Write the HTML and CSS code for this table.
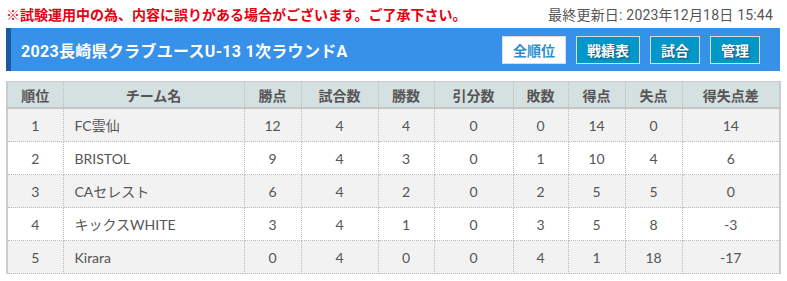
FILE: index.html
```html
<!DOCTYPE html>
<html lang="ja">
<head>
<meta charset="utf-8">
<link rel="stylesheet" href="styles.css">
</head>
<body>
<div class="page">
  <div class="notice-row">
    <span class="notice">※試験運用中の為、内容に誤りがある場合がございます。ご了承下さい。</span>
    <span class="updated">最終更新日: 2023年12月18日 15:44</span>
  </div>
  <div class="titlebar">
    <h1 class="title">2023長崎県クラブユースU-13 1次ラウンドA</h1>
    <div class="btns">
      <a class="btn btn-wide btn-active">全順位</a>
      <a class="btn btn-wide">戦績表</a>
      <a class="btn">試合</a>
      <a class="btn">管理</a>
    </div>
  </div>
  <table class="standings">
    <colgroup>
      <col style="width:56px"><col style="width:181px"><col style="width:57px"><col style="width:77px"><col style="width:56px"><col style="width:79px"><col style="width:55px"><col style="width:57px"><col style="width:57px"><col style="width:98px">
    </colgroup>
    <thead>
      <tr><th>順位</th><th>チーム名</th><th>勝点</th><th>試合数</th><th>勝数</th><th>引分数</th><th>敗数</th><th>得点</th><th>失点</th><th>得失点差</th></tr>
    </thead>
    <tbody>
      <tr><td>1</td><td class="team">FC雲仙</td><td>12</td><td>4</td><td>4</td><td>0</td><td>0</td><td>14</td><td>0</td><td>14</td></tr>
      <tr><td>2</td><td class="team">BRISTOL</td><td>9</td><td>4</td><td>3</td><td>0</td><td>1</td><td>10</td><td>4</td><td>6</td></tr>
      <tr><td>3</td><td class="team">CAセレスト</td><td>6</td><td>4</td><td>2</td><td>0</td><td>2</td><td>5</td><td>5</td><td>0</td></tr>
      <tr><td>4</td><td class="team">キックスWHITE</td><td>3</td><td>4</td><td>1</td><td>0</td><td>3</td><td>5</td><td>8</td><td>-3</td></tr>
      <tr><td>5</td><td class="team">Kirara</td><td>0</td><td>4</td><td>0</td><td>0</td><td>4</td><td>1</td><td>18</td><td>-17</td></tr>
    </tbody>
  </table>
</div>
</body>
</html>
```
FILE: styles.css
```css
html, body {
  margin: 0;
  padding: 0;
  background: #fff;
}
.page {
  padding: 0 7px 0 6px;
  font-family: "Noto Sans CJK JP", "Noto Sans", sans-serif;
}
.notice-row {
  display: flex;
  justify-content: space-between;
  align-items: center;
  height: 28px;
}
.notice {
  color: #e60012;
  font-size: 14px;
  font-weight: 700;
}
.updated {
  color: #555;
  font-size: 14px;
  font-family: Roboto, "Noto Sans CJK JP", sans-serif;
  padding-right: 7px;
  letter-spacing: 0.2px;
}
.titlebar {
  display: flex;
  align-items: center;
  justify-content: space-between;
  height: 43px;
  background: #3891e9;
  border-left: 5px solid #1a5a9e;
  padding: 0 20px 0 10px;
}
.title {
  margin: 0;
  color: #fff;
  font-size: 16px;
  font-weight: 700;
  font-family: Roboto, "Noto Sans CJK JP", sans-serif;
  letter-spacing: 0.3px;
}
.btns {
  display: flex;
  gap: 10px;
}
.btn {
  box-sizing: border-box;
  width: 50px;
  height: 28px;
  display: flex;
  align-items: center;
  justify-content: center;
  background: #0098c8;
  border: 1px solid #dcdcdc;
  color: #fff;
  font-size: 14px;
  font-weight: 700;
  text-shadow: 1px 1px 2px #1a4a6a;
}
.btn-wide {
  width: 64px;
}
.btn-active {
  background: #fff;
  color: #2b8fd0;
  text-shadow: none;
}
.standings {
  margin-top: 10px;
  width: 774px;
  border-collapse: collapse;
  table-layout: fixed;
  border-top: 1px solid #ccc;
  border-left: 2px solid #ccc;
  border-right: 2px solid #ccc;
  font-family: Lato, "Noto Sans CJK JP", sans-serif;
  color: #555;
  font-size: 14px;
}
.standings th {
  background: #d5e0e0;
  height: 25px;
  font-weight: 700;
  color: #555;
  border-bottom: 2px solid #c4c4c4;
  border-right: 1px dotted #bbb;
  padding: 0;
}
.standings td {
  height: 32px;
  text-align: center;
  border-bottom: 1px dotted #bbb;
  border-right: 1px dotted #bbb;
  padding: 0;
}
.standings th:last-child, .standings td:last-child {
  border-right: none;
}
.standings td.team {
  text-align: left;
  padding-left: 11px;
}
.standings tbody tr:nth-child(odd) {
  background: #f2f2f2;
}
.standings tbody tr:nth-child(even) {
  background: #fff;
}
```
